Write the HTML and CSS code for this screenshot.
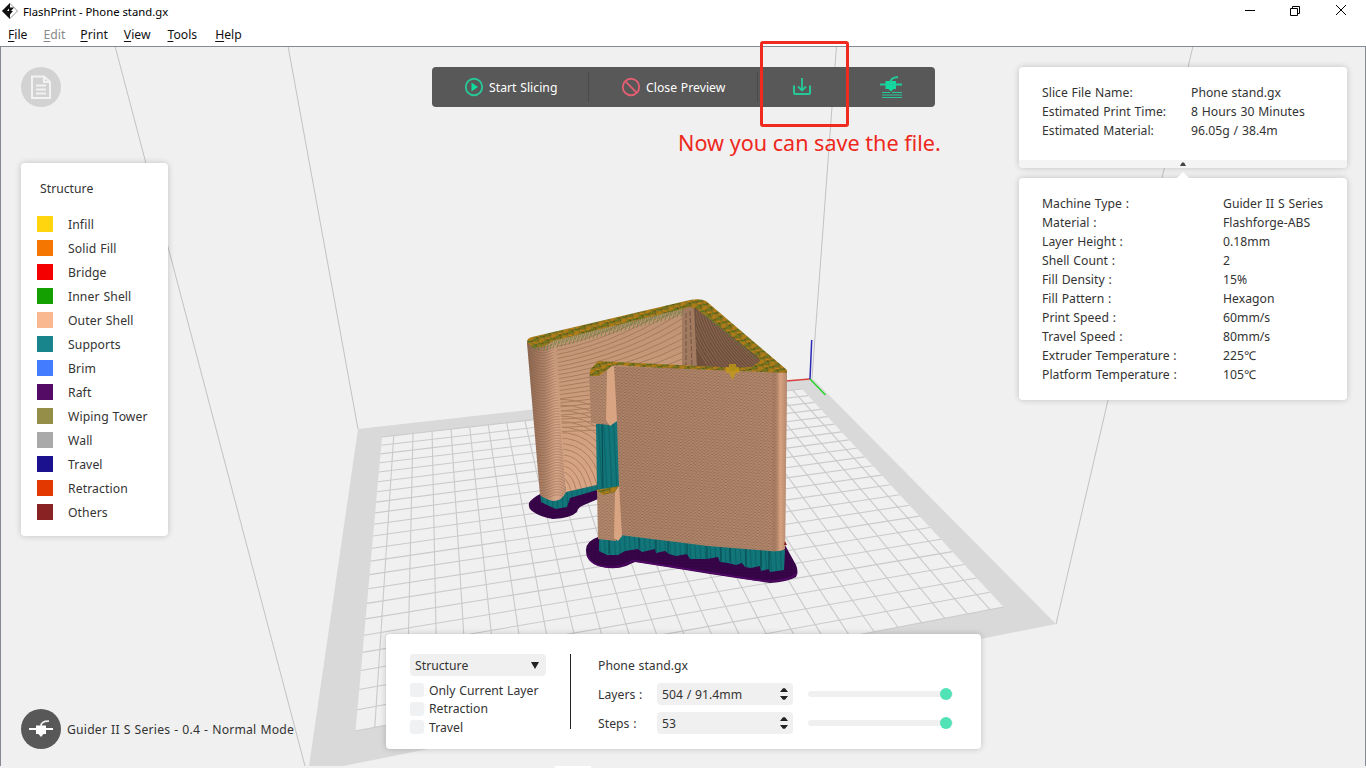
FILE: index.html
```html
<!DOCTYPE html>
<html lang="en">
<head>
<meta charset="utf-8">
<title>FlashPrint - Phone stand.gx</title>
<link rel="stylesheet" href="styles.css">
</head>
<body>
<header class="titlebar">
  <svg class="app-logo" width="16" height="16" viewBox="0 0 16 16"><path d="M8 .5 15.500 8 8 15.500.5 8Z" fill="#fff" stroke="#888" stroke-width=".9"/><path d="M8 0V4.500H12L9 8H11L8 11.500V16L0 8Z" fill="#111"/><path d="M5 8 7 5.500V8Z" fill="#fff"/></svg>
  <span class="app-title">FlashPrint - Phone stand.gx</span>
  <svg class="window-buttons" width="110" height="14" viewBox="0 0 110 14" fill="none" stroke="#000" stroke-width="1"><path d="M0 7.500h10M45.500 5.500h7v7h-7ZM47.500 5v-1.500h7v7H53M91 2l10 10M101 2 91 12"/></svg>
</header>
<nav class="menubar">
  <span><u>F</u>ile</span><span class="disabled"><u>E</u>dit</span><span><u>P</u>rint</span><span><u>V</u>iew</span><span><u>T</u>ools</span><span><u>H</u>elp</span>
</nav>
<main class="viewport">
  <svg class="scene" viewBox="1 47 1364 719">
    <defs>
      <pattern id="weave" width="4" height="3" patternUnits="userSpaceOnUse" patternTransform="rotate(5)"><rect width="4" height="3" fill="#b58b70"/><path d="M0 .5h2M2 2h2" stroke="#93694f" stroke-width=".9"/></pattern>
      <pattern id="rim" width="11" height="7" patternUnits="userSpaceOnUse" patternTransform="rotate(11)"><rect width="11" height="7" fill="#8f7420"/><path d="M0 1h4M6 3.500h4M1 6h4" stroke="#cf830f" stroke-width="1.100"/><path d="M5 1h3M0 3.500h3M7 6h3" stroke="#467318" stroke-width="1.100"/><path d="M3 2.300h2M8 5h2M9 0h2" stroke="#303a10" stroke-width=".8"/></pattern>
      <pattern id="teal" width="5" height="6" patternUnits="userSpaceOnUse" patternTransform="rotate(-3)"><rect width="5" height="6" fill="#117478"/><path d="M.5 0v6" stroke="#0b6065" stroke-width=".8"/><path d="M2 1h1M3 4h1" stroke="#188989" stroke-width=".6"/></pattern>
      <pattern id="violet" width="4" height="3" patternUnits="userSpaceOnUse"><rect width="4" height="3" fill="#340445"/><path d="M0 1h3" stroke="#430655" stroke-width=".6"/></pattern>
      <linearGradient id="column"><stop offset="0" stop-color="#8e6851"/><stop offset=".45" stop-color="#b08469"/><stop offset=".75" stop-color="#d8a688"/><stop offset="1" stop-color="#c6967a"/></linearGradient>
      <linearGradient id="wall" x2="0" y2="1"><stop offset="0" stop-color="#bd9274"/><stop offset="1" stop-color="#daa785"/></linearGradient>
      <linearGradient id="shade"><stop offset="0" stop-color="#5c3727" stop-opacity=".08"/><stop offset=".91" stop-color="#5c3727" stop-opacity=".02"/><stop offset=".96" stop-color="#f0b48f" stop-opacity=".65"/><stop offset="1" stop-color="#b6896e" stop-opacity=".7"/></linearGradient>
      <clipPath id="wallClip"><path d="M556 335 683 308V370H620V482L566 492Z"/></clipPath>
      <clipPath id="columnClip"><path d="M527 343 553 342 566 492 563 499 553 501 540 495Z"/></clipPath>
      <clipPath id="innerClip"><path d="M696 306 762 362 752 372 696 370Z"/></clipPath>
    </defs>
    <g fill="none" stroke="#c2c2c2"><path d="M115 46 305 766M288 46 358 429M836.500 46 812 378M1193 46 1162 178 1108 400 1056 624"/></g>
    <path d="M358 429 812 378 1056 624 308 773Z" fill="#d9d9d9"/>
    <path d="M382 437 802 389 1003.500 607 355.500 731Z" fill="#f0f0f0"/>
    <g id="grid" fill="none" stroke="#cacaca" stroke-width="1.100"></g>
    <g fill="none" stroke-width="1.500"><path d="M786 381 810 379" stroke="#d94040"/><path d="M810 379 811.700 340" stroke="#2929b5"/><path d="M810 379 825.500 395" stroke="#28d328"/></g>

    <path fill="url(#violet)" d="M529 503Q532 498 542 493L596 482 600 490 598 499 584 505Q578 507 577 512 571 518 553 519 540 517 532 511Q528 508 529 503Z"/>
    <path fill="url(#teal)" d="M540 492 597 480V490L570 498 567 507 556 509 549 506 541 502Z"/>
    <path fill="url(#wall)" d="M549 335 690 304V372H618V480L566 492Z"/>
    <g id="wallArcs" fill="none" stroke="#93694f" stroke-width="1" opacity=".6" clip-path="url(#wallClip)"></g>
    <path fill="url(#column)" d="M527 343Q527 340 532 338L553 340 566 492Q562 501 553 501 545 499 540 495Z"/>
    <g id="columnArcs" fill="none" stroke="#6f4a37" stroke-width=".8" opacity=".4" clip-path="url(#columnClip)"></g>
    <path fill="#70503e" d="M682 305 702 303 764 360 756 372 682 370Z"/>
    <path fill="#a17a60" d="M682 305 694 305 697 370H682Z"/>
    <g id="innerLines" fill="none" stroke="#a67e65" stroke-width=".8" opacity=".65" clip-path="url(#innerClip)"></g>
    <path d="M686 313V365M690 311 692 366" stroke="#745443" stroke-width="1" stroke-dasharray="5 2"/>
    <path fill="url(#rim)" fill-rule="evenodd" d="M527 342Q527 338 532 337L690 300Q700 298 706 301L787 370V373L774 375 723 372 643 367 615 365 606 369 599 375 590 375 590 370 598 361 730 367.500 752 367 760 361 758 357 697 309 690 307 553 341 545 346 533 348Z"/>
    <g id="rimFringe" stroke="#578032" stroke-width="1" opacity=".6"></g>

    <path fill="url(#violet)" d="M586 550Q586 541 598 537L785 545 796 565Q799 572 796 577 787 582 770 583L743 579 710 574 667 567 635 562Q632 563 626 566 615 570 602 567 592 564 589 560 586 556 586 550Z"/>
    <path fill="none" stroke="#54086a" stroke-width="1.300" d="M587 555Q592 566 604 566.500 619 569 633 560.500L668 566 744 578Q784 586 797 573"/>
    <path fill="url(#teal)" d="M599 537 623 534 785 550 784 570 770 572 769 569 761 571 760 566 751 568 745 567 742 563 736 565 728 563 720 562 718 557 707 559 690 559 687 554 676 556 669 554 665 551 656 553 655 549 642 552 638 549 625 551 618 555 607 555 599 551Z"/>
    <path d="M609 538V554M639 538V549M656 540V552M668 541V553M687 543V555M707 545V559M721 546V562M730 547V562M746 549V567M761 550V568M769 551V570" stroke="#07484e" fill="none"/>
    <path fill="url(#weave)" d="M610 366 787 373 785 549Q780 552 770 551L708 546 620 535 615 425Z"/>
    <path fill="url(#shade)" d="M614 366 787 373 785 549Q780 552 770 551L708 546 622 535 617 425Z"/>
    <path fill="url(#teal)" d="M596 424 617 421 619 487 597 490Z"/>
    <path d="M602 424 603 488" stroke="#07494e"/>
    <path fill="url(#weave)" d="M589 372 608 370 609 425 591 423Z"/>
    <path fill="#d9a482" d="M607 371Q609 366 614 366L617 421 610 426 606 420Z"/>
    <path fill="url(#weave)" d="M597 490 616 489 616 541 598 539Z"/>
    <path fill="#d9a482" d="M615 491 619 486 622 536 618 541 614 538Z"/>
    <path fill="url(#rim)" d="M596 490 619 486 615 492 603 495ZM590 371 614 364 607 370 599 376 590 376Z"/>
    <path fill="#c49b13" opacity=".75" d="M729 364H736V367H739V373H736L732.500 380 729 373H726V367H729Z"/>
    <path fill="#8c1d1d" d="M785 541 787 545H784Z"/>
  </svg>

  <div class="round-button notes">
    <svg width="22" height="26" viewBox="0 0 22 26" fill="none" stroke="#f2f2f2" stroke-width="2"><path d="M2 2.500H14L20 8V24H2ZM14 3V8H19"/><path d="M6 11.500H16M6 15.500H16M6 19.500H16" stroke-width="1.900"/></svg>
  </div>

  <section class="panel legend">
    <h2>Structure</h2>
    <ul>
      <li><i class="infill"></i>Infill</li><li><i class="solid"></i>Solid Fill</li><li><i class="bridge"></i>Bridge</li><li><i class="inner"></i>Inner Shell</li><li><i class="outer"></i>Outer Shell</li><li><i class="supports"></i>Supports</li><li><i class="brim"></i>Brim</li><li><i class="raft"></i>Raft</li><li><i class="tower"></i>Wiping Tower</li><li><i class="wall"></i>Wall</li><li><i class="travel"></i>Travel</li><li><i class="retraction"></i>Retraction</li><li><i class="others"></i>Others</li>
    </ul>
  </section>

  <div class="toolbar">
    <div class="tool slice"><svg width="20" height="20" viewBox="0 0 20 20"><circle cx="10" cy="10" r="8.200" fill="none" stroke="#27c797" stroke-width="1.900"/><path d="M7.500 5.500V14.500L14 10Z" fill="#12d99c"/></svg>Start Slicing</div>
    <div class="tool close"><svg width="20" height="20" viewBox="0 0 20 20" fill="none" stroke="#e35e70" stroke-width="1.900"><circle cx="10" cy="10" r="8.200"/><path d="M4.200 4.200 15.800 15.800"/></svg>Close Preview</div>
    <div class="tool save"><svg width="20" height="20" viewBox="0 0 20 20" fill="none" stroke="#25c998" stroke-width="2"><path d="M2 8.500V16Q2 17 3 17H17Q18 17 18 16V8.500"/><path d="M10 1V13M6 9.500 10 13.500 14 9.500" stroke-width="1.800"/></svg></div>
    <div class="tool print"><svg width="24" height="24" viewBox="0 0 24 24"><path d="M6.500 6H17V14H14.500L12 16.500 9.500 14H6.500Z" fill="#10dca0"/><path d="M1 9.500H23M11.500 8Q11 2.500 19 2" fill="none" stroke="#20cc9b" stroke-width="2"/><path d="M3 17.500H11M13 17.500H23M3 20H23M3 22.500H23" stroke="#27c79a" stroke-width="1.200"/></svg></div>
  </div>
  <div class="save-marker"></div>
  <p class="save-note">Now you can save the file.</p>

  <section class="panel summary">
    <dl><dt>Slice File Name:</dt><dd>Phone stand.gx</dd><dt>Estimated Print Time:</dt><dd>8 Hours 30 Minutes</dd><dt>Estimated Material:</dt><dd>96.05g / 38.4m</dd></dl>
    <div class="fold"><svg width="6" height="4" viewBox="0 0 6 4"><path d="M0 4 2 .5H4L6 4Z" fill="#444"/></svg></div>
  </section>

  <section class="panel details">
    <svg class="caret" width="12" height="6" viewBox="0 0 12 6"><path d="M0 6 6 0 12 6Z" fill="#fff"/></svg>
    <dl><dt>Machine Type :</dt><dd>Guider II S Series</dd><dt>Material :</dt><dd>Flashforge-ABS</dd><dt>Layer Height :</dt><dd>0.18mm</dd><dt>Shell Count :</dt><dd>2</dd><dt>Fill Density :</dt><dd>15%</dd><dt>Fill Pattern :</dt><dd>Hexagon</dd><dt>Print Speed :</dt><dd>60mm/s</dd><dt>Travel Speed :</dt><dd>80mm/s</dd><dt>Extruder Temperature :</dt><dd>225℃</dd><dt>Platform Temperature :</dt><dd>105℃</dd></dl>
  </section>

  <section class="panel controls">
    <div class="view-options">
      <div class="field select">Structure<svg width="8" height="7" viewBox="0 0 8 7"><path d="M0 0H8L4 7Z" fill="#222"/></svg></div>
      <label><i></i>Only Current Layer</label>
      <label><i></i>Retraction</label>
      <label><i></i>Travel</label>
    </div>
    <div class="ranges">
      <div class="file-name">Phone stand.gx</div>
      <div class="range"><span>Layers :</span><div class="field">504 / 91.4mm<svg width="8" height="12" viewBox="0 0 8 12"><path d="M0 4 3 .3H5L8 4ZM0 8H8L5 11.700H3Z" fill="#222"/></svg></div><div class="track"><b></b></div></div>
      <div class="range"><span>Steps :</span><div class="field">53<svg width="8" height="12" viewBox="0 0 8 12"><path d="M0 4 3 .3H5L8 4ZM0 8H8L5 11.700H3Z" fill="#222"/></svg></div><div class="track"><b></b></div></div>
    </div>
  </section>

  <div class="machine">
    <div class="round-button dark"><svg width="24" height="20" viewBox="0 0 24 20"><path d="M7 6.500H17V15H14.500L12 18 9.500 15H7Z" fill="#fff"/><path d="M0 10H24" stroke="#fff" stroke-width="2"/><path d="M12 7.500Q11.500 2 20 2.200" fill="none" stroke="#eee" stroke-width="1.800"/></svg></div>
    <span>Guider II S Series - 0.4 - Normal Mode</span>
  </div>
</main>
<footer class="bottom-edge"><i></i></footer>
<script src="scene.js"></script>
</body>
</html>
```
FILE: styles.css
```css
* { box-sizing: border-box; }
body { margin: 0; width: 1366px; height: 768px; overflow: hidden; display: flex; flex-direction: column; background: #fff; color: #333; font: 12.2px/19px "Noto Sans", "Noto Sans CJK SC", sans-serif; letter-spacing: .02px; word-spacing: .6px; }
h2, p, ul, dl, dd { margin: 0; padding: 0; }
.titlebar { height: 24px; display: flex; align-items: center; padding: 0 11px 2px 2px; color: #000; font-size: 11.3px; letter-spacing: 0; word-spacing: 0; }
.app-title { margin-left: 5px; flex: 1; padding-top: 1px; }
.window-buttons { margin-bottom: 2px; }
.menubar { height: 22px; display: flex; gap: 16px; padding: 1px 8px 0; color: #111; line-height: 20px; font-size: 12.2px; letter-spacing: 0; }
.menubar span:nth-child(5) { margin-left: 1px; margin-right: 2px; }
.menubar u { text-underline-offset: 2px; }
.menubar .disabled { color: #888; margin-right: -1px; }
.viewport { position: relative; height: 720px; border: 1px solid #858992; border-bottom: 0; background: #f0f0f0; }
.scene { display: block; width: 1364px; height: 719px; }
.panel { position: absolute; background: #fff; border-radius: 4px; box-shadow: 0 0 6px rgba(0, 0, 0, .2); }
.round-button { width: 40px; height: 40px; border-radius: 50%; display: flex; align-items: center; justify-content: center; }
.notes { position: absolute; left: 20px; top: 20px; background: #d2d2d2; }
.dark { background: #585858; }

.legend { left: 20px; top: 116px; width: 147px; height: 373px; padding: 16px; }
.legend h2 { font: inherit; padding-left: 3px; line-height: 20px; }
.legend ul { list-style: none; padding-top: 13px; }
.legend li { height: 24px; display: flex; align-items: center; gap: 15px; white-space: nowrap; padding-top: 1px; letter-spacing: .1px; }
.legend i { width: 16px; height: 16px; margin-top: -1px; }
.infill { background: #ffd510; } .solid { background: #f57600; } .bridge { background: #f50000; } .inner { background: #13a000; } .outer { background: #fab890; } .supports { background: #18858c; } .brim { background: #447cff; } .raft { background: #530b66; } .tower { background: #948e49; } .wall { background: #a9a9a9; } .travel { background: #1b118f; } .retraction { background: #e33900; } .others { background: #892323; }

.toolbar { position: absolute; left: 431px; top: 20px; width: 503px; height: 40px; border-radius: 4px; background: #585858; color: #fff; display: flex; align-items: center; }
.tool { display: flex; align-items: center; height: 30px; gap: 5px; white-space: nowrap; }
.slice { width: 157px; padding-left: 32px; border-right: 1px solid #4a4a4a; }
.close { width: 169px; padding-left: 32px; border-right: 1px solid #4a4a4a; }
.save { width: 89px; padding-left: 34px; }
.print { padding-left: 32px; }
.save-marker { position: absolute; left: 759px; top: -6px; width: 89px; height: 86px; border: 3px solid #f02a1e; border-radius: 3px; }
.save-note { position: absolute; left: 677px; top: 81px; color: #ee281c; font-size: 21.6px; line-height: 30px; letter-spacing: 0; word-spacing: 0; white-space: nowrap; }

.summary { left: 1018px; top: 20px; width: 328px; height: 101px; display: flex; flex-direction: column; justify-content: space-between; overflow: hidden; }
.summary dl { display: grid; grid-template-columns: 149px 1fr; padding: 16px 23px 0; white-space: nowrap; }
.fold { height: 8px; background: #f4f4f4; display: flex; justify-content: center; align-items: center; }
.details { left: 1018px; top: 131px; width: 328px; height: 222px; padding: 16px 0 0 23px; }
.details dl { display: grid; grid-template-columns: 181px 1fr; white-space: nowrap; }
.caret { position: absolute; left: 158px; top: -6px; }

.controls { left: 385px; top: 587px; width: 595px; height: 115px; display: flex; padding: 20px 24px; }
.view-options { width: 161px; height: 75px; border-right: 1px solid #222; }
.field { width: 136px; height: 22px; border-radius: 4px; background: #f0f0f0; display: flex; align-items: center; justify-content: space-between; padding: 0 5px; }
.select { padding-right: 7px; margin-bottom: 5px; }
.view-options label { display: flex; align-items: center; gap: 5px; height: 18.5px; }
.view-options label i { width: 14px; height: 14px; border-radius: 3px; background: #f0f1f3; }
.ranges { padding-left: 27px; }
.file-name { height: 29px; line-height: 23px; }
.range { display: flex; align-items: center; height: 22px; margin-bottom: 7px; }
.range > span { width: 59px; }
.track { width: 145px; height: 6px; margin-left: 15px; border-radius: 3px; background: #f0f0f0; display: flex; justify-content: flex-end; align-items: center; padding-right: 1px; }
.track b { width: 12px; height: 12px; border-radius: 50%; background: #51e2b5; }
.machine { position: absolute; left: 20px; top: 662px; display: flex; align-items: center; gap: 6px; white-space: nowrap; letter-spacing: .2px; }
.bottom-edge { height: 2px; background: #f0f0f0; padding-left: 555px; }
.bottom-edge i { display: block; width: 36px; height: 2px; background: #fff; }
```
FILE: scene.js
```javascript
const NS = 'http://www.w3.org/2000/svg';
function draw(id, d) {
  const path = document.createElementNS(NS, 'path');
  path.setAttribute('d', d);
  document.getElementById(id).appendChild(path);
}
// Projects bed coordinates (0..1) onto the four corners of the printable area.
const [p0, p1, p2, p3] = [[382, 437], [802, 389], [1003.5, 607], [355.5, 731]];
const dx1 = p1[0] - p2[0], dx2 = p3[0] - p2[0], dx3 = p0[0] - p1[0] + p2[0] - p3[0];
const dy1 = p1[1] - p2[1], dy2 = p3[1] - p2[1], dy3 = p0[1] - p1[1] + p2[1] - p3[1];
const det = dx1 * dy2 - dx2 * dy1;
const g = (dx3 * dy2 - dx2 * dy3) / det, h = (dx1 * dy3 - dx3 * dy1) / det;
function project(u, v) {
  const w = g * u + h * v + 1;
  return [0, 1].map(i => (((p1[i] - p0[i] + g * p1[i]) * u + (p3[i] - p0[i] + h * p3[i]) * v + p0[i]) / w).toFixed(1)).join(' ');
}
const columns = 24.2, rows = 22;
for (let i = 0; i < 24; i++) {
  const u = (i + .6) / columns;
  draw('grid', `M${project(u, 0)}L${project(u, 1)}`);
}
for (let i = 0; i <= rows; i++) draw('grid', `M${project(0, i / rows)}L${project(1, i / rows)}`);

// Layer lines on the curved walls.
for (let i = 0; i < 16; i++) {
  const r = 10 + i * 5.5;
  draw('wallArcs', `M556 ${492 - r}Q${556 + r * .8} ${490 - r} ${556 + r} 494`);
}
for (let i = 0; i < 22; i++) {
  const y = 338 + i * 4;
  draw('wallArcs', `M550 ${y + 10}Q630 ${y - 6 + i * .6} 692 ${y - 62 + i * 3.2}`);
}
for (let i = 0; i < 58; i++) {
  const y = 345 + i * 2.7;
  draw('columnArcs', `M525 ${y - 8}Q540 ${y + 4} 550 ${y - 2}T568 ${y + 2}`);
}
for (let i = 0; i < 22; i++) draw('innerLines', `M${680 + i * 3} ${300 + i * 1.5}Q${690 + i * 3} 350 ${720 + i * 4} 380`);
for (let i = 0; i < 66; i++) {
  const x = 553 + i * 2, y = 342 - i * .5;
  draw('rimFringe', `M${x} ${y - 1}l-2 ${5 + i * 3 % 6}`);
}
for (let i = 0; i < 18; i++) draw('rimFringe', `M${699 + i * 3.2} ${312 + i * 2.7}l4 -1`);
for (let i = 0; i < 7; i++) draw('rimFringe', `M${533 + i * 3} 344l-1 ${5 + i % 3}`);
```
